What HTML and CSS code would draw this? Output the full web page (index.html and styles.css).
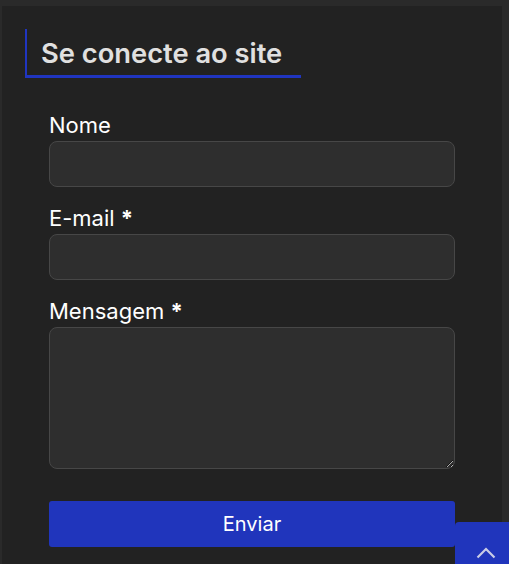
FILE: index.html
```html
<!DOCTYPE html>
<html lang="pt-BR">
<head>
<meta charset="utf-8">
<title>Se conecte ao site</title>
<link rel="stylesheet" href="styles.css">
</head>
<body>
<div class="panel">
  <h2 class="panel-title"><span>Se conecte ao site</span></h2>
  <form class="contact-form">
    <div class="field">
      <label class="field-label" for="nome">Nome</label>
      <input class="field-input" id="nome" type="text">
    </div>
    <div class="field">
      <label class="field-label" for="email">E-mail <span class="req">*</span></label>
      <input class="field-input" id="email" type="email">
    </div>
    <div class="field">
      <label class="field-label" for="msg">Mensagem <span class="req">*</span></label>
      <textarea class="field-input field-textarea" id="msg"></textarea>
    </div>
    <button class="submit" type="button">Enviar</button>
  </form>
</div>
<a class="to-top" href="#" aria-label="Voltar ao topo">
  <svg width="20" height="12" viewBox="0 0 20 12"><path d="M1.5 10.5 L10 2 L18.5 10.5" fill="none" stroke="#c9cce6" stroke-width="2.2"/></svg>
</a>
</body>
</html>
```
FILE: styles.css
```css
html, body {
  margin: 0;
  padding: 0;
  background: #2a2a2a;
  font-family: Inter, "Noto Sans", sans-serif;
  overflow: hidden;
  height: 564px;
}
.panel {
  margin: 6px 7px 0 2px;
  background: #222222;
  padding: 23px 23px 0 23px;
  height: 558px;
  box-sizing: border-box;
}
.panel-title {
  margin: 0;
  width: 276px;
  height: 49px;
  box-sizing: border-box;
  border-left: 2px solid #2035c0;
  border-bottom: 3px solid #2035c0;
  padding: 10px 0 0 14px;
  font-size: 27.3px;
  font-weight: 600;
  color: #e0e0e0;
  line-height: 30px;
}
.contact-form {
  margin: 34px 24px 0 24px;
  display: flex;
  flex-direction: column;
}
.field {
  display: flex;
  flex-direction: column;
  margin-bottom: 18px;
}
.field-label {
  color: #ffffff;
  font-size: 22px;
  line-height: 24px;
  padding-top: 1px;
  margin-bottom: 4px;
}
.req {
  font-weight: 700;
}
.field-input {
  height: 46px;
  box-sizing: border-box;
  background: #2e2e2e;
  border: 1px solid #474747;
  border-radius: 8px;
  color: #fff;
  font: inherit;
  padding: 8px 12px;
  outline: none;
}
.field-textarea {
  height: 142px;
  resize: vertical;
}
.submit {
  margin-top: 14px;
  height: 46px;
  border: none;
  border-radius: 3px;
  background: #2035bc;
  color: #ffffff;
  font-family: Inter, "Noto Sans", sans-serif;
  font-size: 20px;
  cursor: pointer;
}
.to-top {
  position: fixed;
  left: 455px;
  top: 522px;
  width: 62px;
  height: 60px;
  background: #2035bc;
  border-radius: 4px 0 0 0;
  display: flex;
  justify-content: center;
  padding-top: 25px;
  box-sizing: border-box;
}
```
